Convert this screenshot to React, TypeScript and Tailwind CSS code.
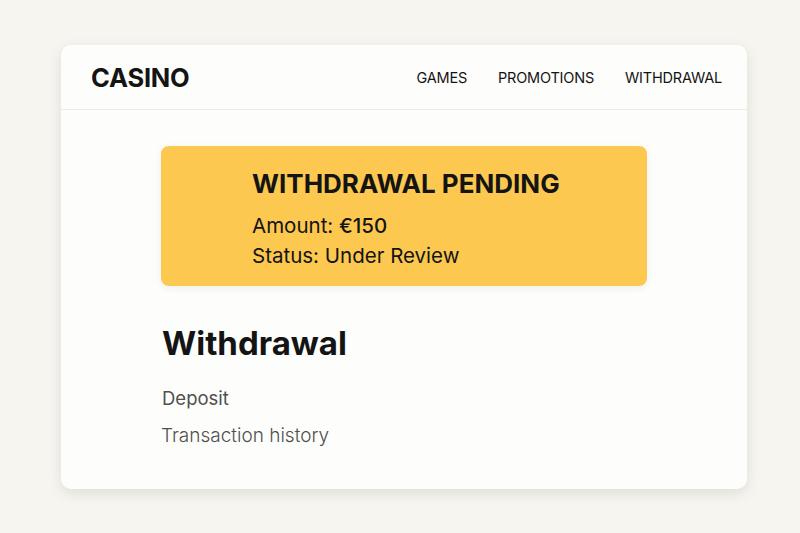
import React from 'react';

const navItems = ['GAMES', 'PROMOTIONS', 'WITHDRAWAL'];

const App: React.FC = () => {
  return (
    <div
      className="min-h-[533px] w-full bg-[#f6f5ef] pt-[45px] text-[#141414]"
      style={{ fontFamily: 'Inter, "Noto Sans", sans-serif' }}
    >
      <div className="ml-[61px] h-[444px] w-[686px] rounded-[10px] bg-[#fdfdfb] shadow-[0_4px_14px_rgba(0,0,0,0.10)]">
        {/* Header */}
        <header className="flex h-[65px] items-center justify-between border-b border-[#ecebe6] pl-[30px] pr-[25px] pt-[2px]">
          <div className="text-[25.5px] font-bold tracking-[-0.2px]">CASINO</div>
          <nav className="flex gap-[31px] text-[14.5px] font-normal tracking-[-0.2px]">
            {navItems.map((item) => (
              <span key={item}>{item}</span>
            ))}
          </nav>
        </header>

        <main className="px-[100px] pt-[36px]">
          {/* Pending notice */}
          <div className="h-[140px] rounded-[8px] bg-[#fcc850] pl-[91px] pt-[22px] shadow-[0_2px_8px_rgba(0,0,0,0.06)]">
            <h2 className="text-[26px] font-bold leading-[32px]">WITHDRAWAL PENDING</h2>
            <p className="mt-[13px] text-[20.5px] leading-[26px]">
              Amount: <span className="font-medium">€150</span>
            </p>
            <p className="mt-[4px] text-[20.5px] leading-[26px]">Status: Under Review</p>
          </div>

          <h1 className="mt-[36px] pl-[1px] text-[33px] font-bold leading-[42px]">Withdrawal</h1>
          <ul className="mt-[22px] text-[#505050]">
            <li className="pl-[1px] text-[18.5px] leading-[24px]">Deposit</li>
            <li className="mt-[13px] text-[19px] font-light leading-[26px]">Transaction history</li>
          </ul>
        </main>
      </div>
    </div>
  );
};

export default App;
